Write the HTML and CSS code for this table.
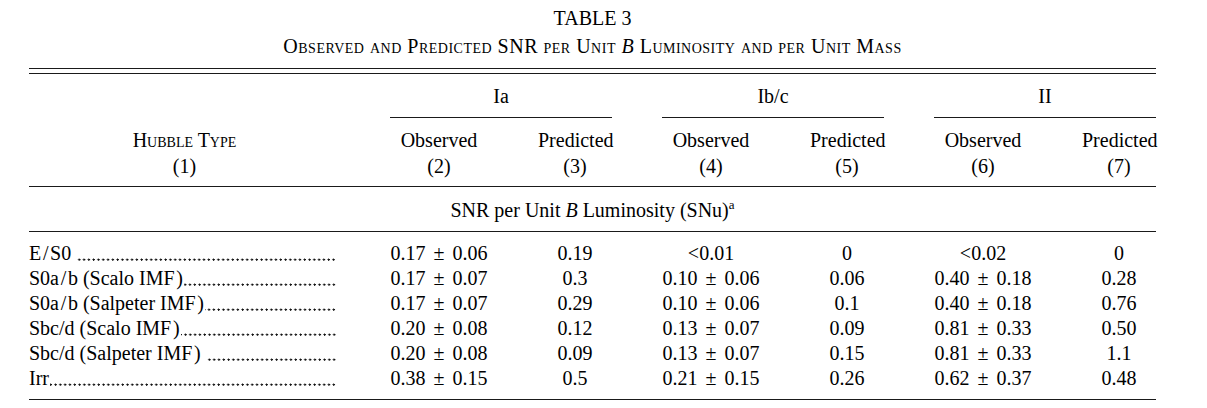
FILE: index.html
```html
<!DOCTYPE html>
<html lang="en">
<head>
<meta charset="utf-8">
<title>Table 3</title>
<link rel="stylesheet" href="styles.css">
</head>
<body>
<div class="page">
  <div class="caption">
    <div class="title">TABLE 3</div>
    <div class="subtitle">Observed and Predicted SNR per Unit <i>B</i> Luminosity and per Unit Mass</div>
  </div>
  <div class="table">
    <div class="rule-double"></div>
    <div class="grid groups">
      <div></div>
      <div class="group">Ia</div>
      <div class="group">Ib/c</div>
      <div class="group">II</div>
    </div>
    <div class="grid heads">
      <div class="head"><span class="sc">Hubble Type</span><br>(1)</div>
      <div class="head">Observed<br>(2)</div>
      <div class="head">Predicted<br>(3)</div>
      <div class="head">Observed<br>(4)</div>
      <div class="head">Predicted<br>(5)</div>
      <div class="head">Observed<br>(6)</div>
      <div class="head">Predicted<br>(7)</div>
    </div>
    <div class="section">SNR per Unit <i>B</i> Luminosity (SNu)<sup>a</sup></div>
    <div class="body">
      <div class="grid row">
        <div class="label"><span class="name spaced">E&#8202;/&#8202;S0</span><span class="dots"></span></div>
        <div class="num pm">0.17 ± 0.06</div><div class="num">0.19</div>
        <div class="num">&lt;0.01</div><div class="num">0</div>
        <div class="num">&lt;0.02</div><div class="num">0</div>
      </div>
      <div class="grid row">
        <div class="label"><span class="name">S0a&#8202;/&#8202;b (Scalo IMF&#8202;)</span><span class="dots"></span></div>
        <div class="num pm">0.17 ± 0.07</div><div class="num">0.3</div>
        <div class="num pm">0.10 ± 0.06</div><div class="num">0.06</div>
        <div class="num pm">0.40 ± 0.18</div><div class="num">0.28</div>
      </div>
      <div class="grid row">
        <div class="label"><span class="name">S0a&#8202;/&#8202;b (Salpeter IMF&#8202;)</span><span class="dots"></span></div>
        <div class="num pm">0.17 ± 0.07</div><div class="num">0.29</div>
        <div class="num pm">0.10 ± 0.06</div><div class="num">0.1</div>
        <div class="num pm">0.40 ± 0.18</div><div class="num">0.76</div>
      </div>
      <div class="grid row">
        <div class="label"><span class="name">Sbc/d (Scalo IMF&#8202;)</span><span class="dots"></span></div>
        <div class="num pm">0.20 ± 0.08</div><div class="num">0.12</div>
        <div class="num pm">0.13 ± 0.07</div><div class="num">0.09</div>
        <div class="num pm">0.81 ± 0.33</div><div class="num">0.50</div>
      </div>
      <div class="grid row">
        <div class="label"><span class="name spaced">Sbc/d (Salpeter IMF&#8202;)</span><span class="dots"></span></div>
        <div class="num pm">0.20 ± 0.08</div><div class="num">0.09</div>
        <div class="num pm">0.13 ± 0.07</div><div class="num">0.15</div>
        <div class="num pm">0.81 ± 0.33</div><div class="num">1.1</div>
      </div>
      <div class="grid row">
        <div class="label"><span class="name">Irr</span><span class="dots"></span></div>
        <div class="num pm">0.38 ± 0.15</div><div class="num">0.5</div>
        <div class="num pm">0.21 ± 0.15</div><div class="num">0.26</div>
        <div class="num pm">0.62 ± 0.37</div><div class="num">0.48</div>
      </div>
    </div>
  </div>
</div>
</body>
</html>
```
FILE: styles.css
```css
html, body {
  margin: 0;
  padding: 0;
  background: #ffffff;
}

body {
  font-family: "Liberation Serif", "Times New Roman", serif;
  font-size: 20px;
  color: #000000;
}

.page {
  padding: 6px 0 0 29px;
  width: 1127px;
}

.caption {
  text-align: center;
  margin-bottom: 10px;
}

.title {
  line-height: 24px;
}

.subtitle {
  line-height: 24px;
  margin-top: 4px;
  font-variant: small-caps;
  letter-spacing: 0.5px;
}

.rule-double {
  height: 4px;
  border-top: 1px solid #1a1a1a;
  border-bottom: 1px solid #1a1a1a;
}

.grid {
  display: grid;
  grid-template-columns: 311px repeat(3, 98px 74px);
  column-gap: 50px;
}

.groups {
  padding-top: 10px;
}

.group {
  grid-column: span 2;
  text-align: center;
  line-height: 25px;
  padding-bottom: 8px;
  border-bottom: 1px solid #1a1a1a;
}

.heads {
  padding: 9px 0 7px;
  border-bottom: 1px solid #1a1a1a;
}

.head {
  text-align: center;
  line-height: 26px;
  white-space: nowrap;
}

.sc {
  font-variant: small-caps;
}

.section {
  text-align: center;
  line-height: 25px;
  padding: 10.5px 0 8.5px;
  border-bottom: 1px solid #1a1a1a;
}

.section sup {
  font-size: 13px;
  line-height: 0;
  vertical-align: 8px;
}

.body {
  padding: 8.5px 0;
  border-bottom: 1.5px solid #1a1a1a;
}

.row {
  line-height: 25px;
}

.label {
  display: flex;
  white-space: nowrap;
  padding-right: 4px;
}

.name.spaced {
  margin-right: 5px;
}

.dots {
  flex: 1;
  margin-left: 1px;
  background-image: radial-gradient(circle at 2.5px 18.6px, #111 0.85px, rgba(0, 0, 0, 0) 1.35px);
  background-size: 4.8px 25px;
  background-repeat: repeat-x;
  background-position: right top;
}

.num {
  text-align: center;
  white-space: nowrap;
}

.pm {
  word-spacing: 3px;
}
```
